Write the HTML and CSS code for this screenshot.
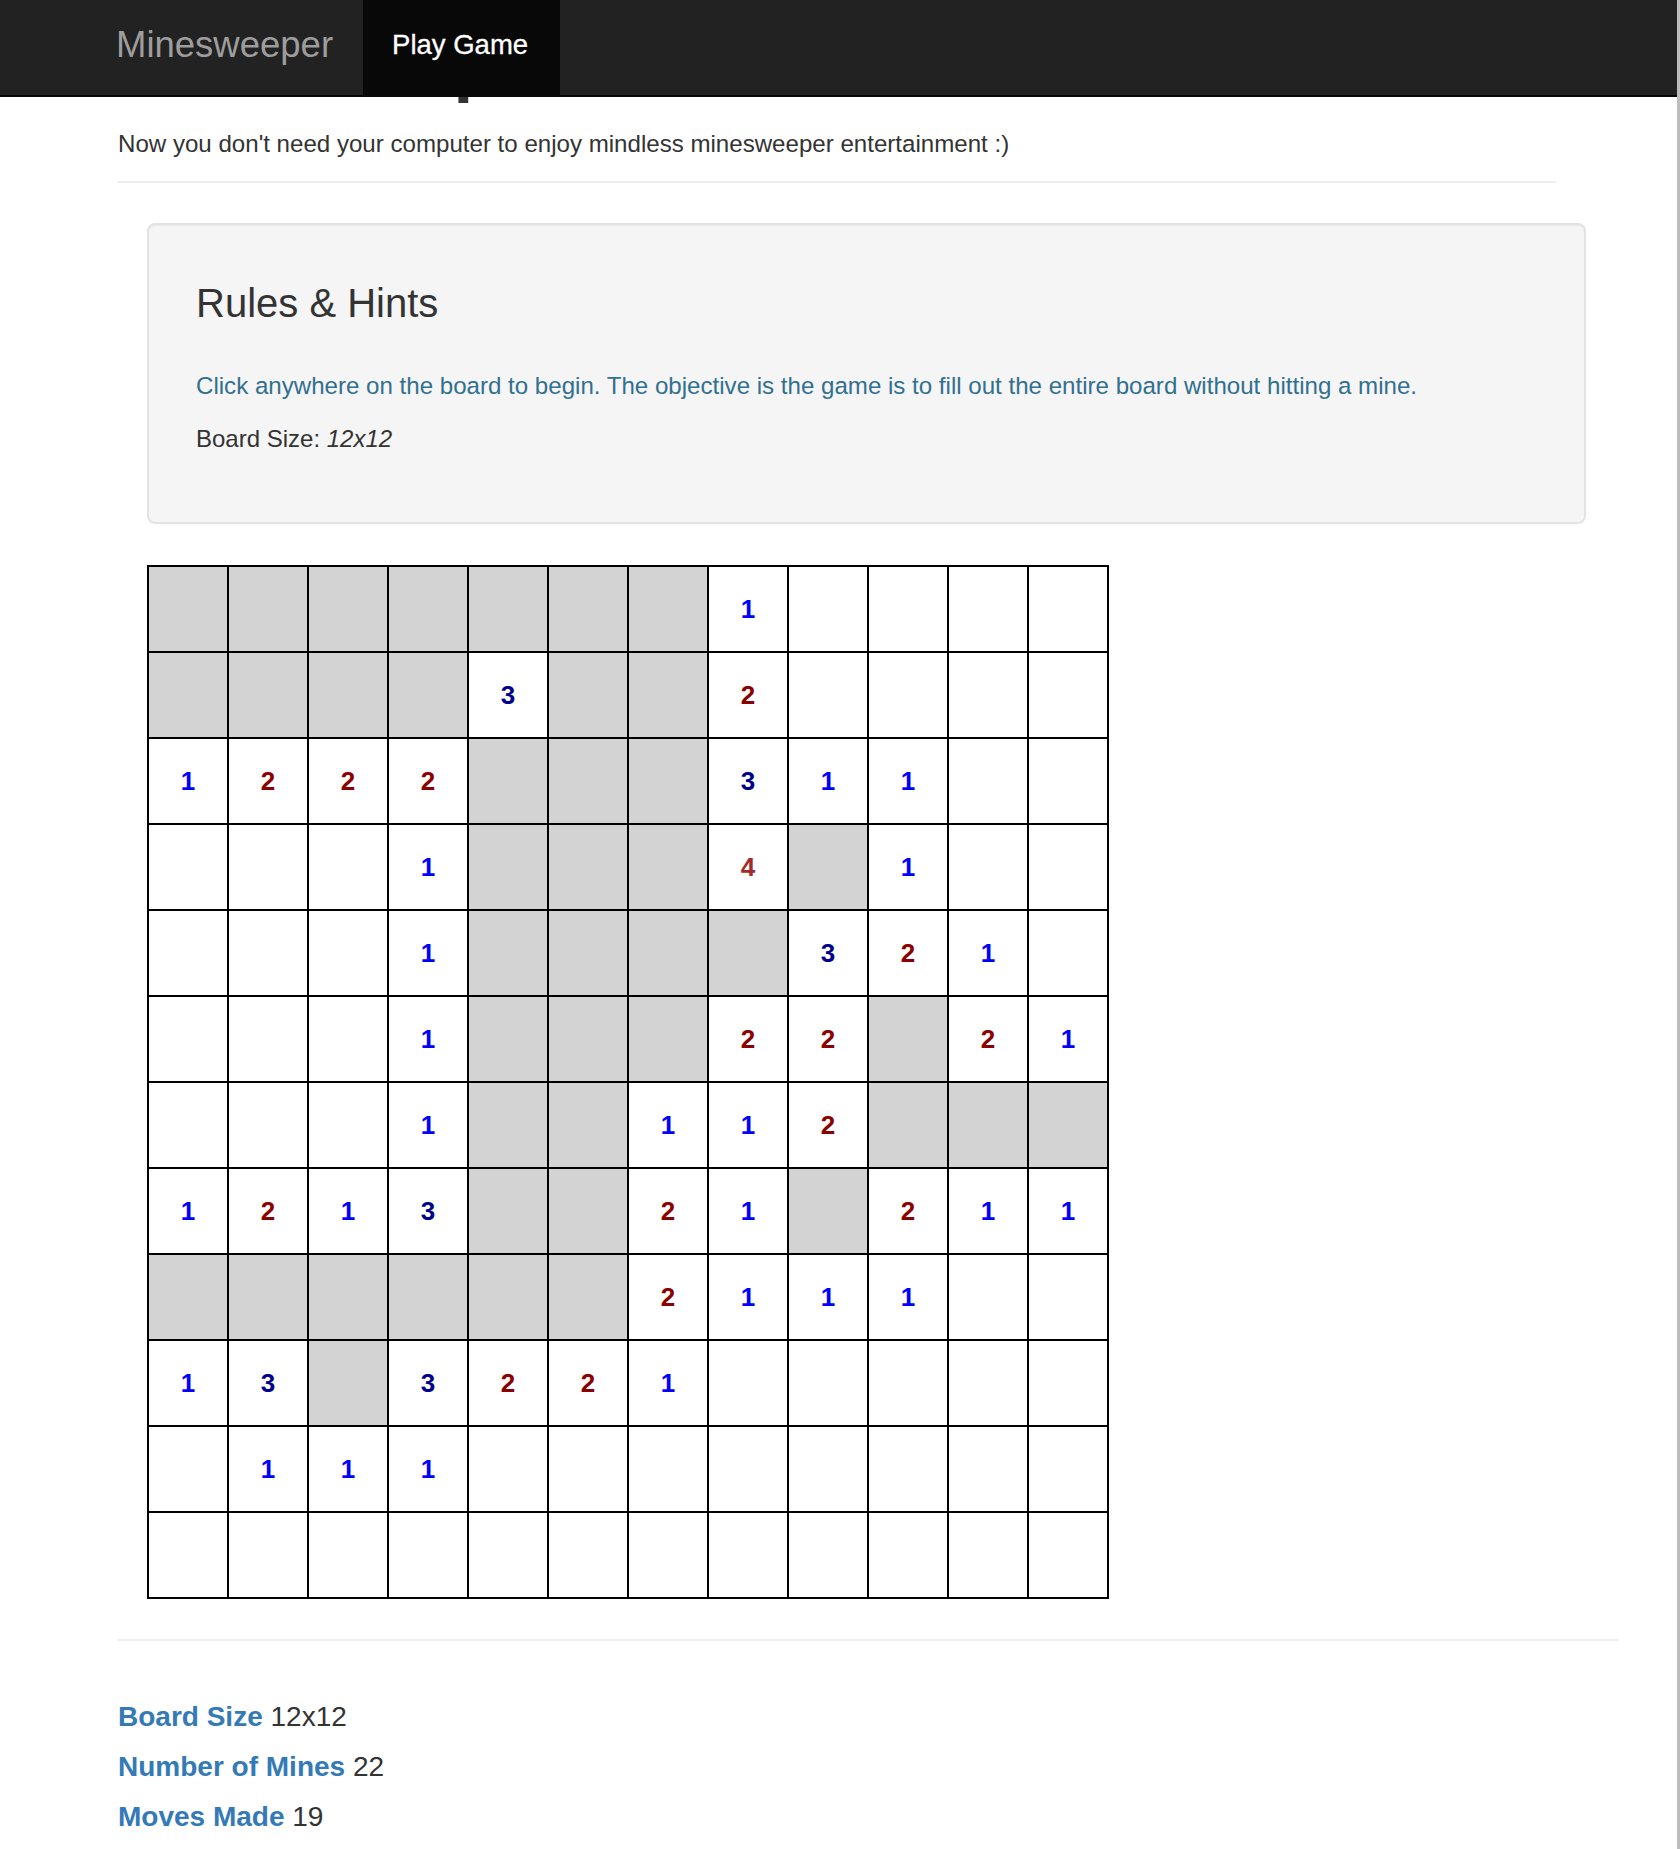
FILE: index.html
```html
<!DOCTYPE html>
<html lang="en">
<head>
<meta charset="utf-8">
<title>Minesweeper</title>
<link rel="stylesheet" href="styles.css">
</head>
<body>
<nav class="navbar">
  <a class="brand" href="#">Minesweeper</a>
  <a class="nav-link active" href="#">Play Game</a>
</nav>

<main class="main">
  <header class="page-header">
    <h1 class="title">Minesweeper</h1>
    <p class="subtitle">Now you don't need your computer to enjoy mindless minesweeper entertainment :)</p>
  </header>
  <hr class="rule rule-top">

  <section class="well">
    <h2 class="well-title">Rules &amp; Hints</h2>
    <p class="info">Click anywhere on the board to begin. The objective is the game is to fill out the entire board without hitting a mine.</p>
    <p class="size">Board Size: <em>12x12</em></p>
  </section>

  <div class="board">
    <div class="c g"></div><div class="c g"></div><div class="c g"></div><div class="c g"></div><div class="c g"></div><div class="c g"></div><div class="c g"></div><div class="c n1">1</div><div class="c"></div><div class="c"></div><div class="c"></div><div class="c"></div>
    <div class="c g"></div><div class="c g"></div><div class="c g"></div><div class="c g"></div><div class="c n3">3</div><div class="c g"></div><div class="c g"></div><div class="c n2">2</div><div class="c"></div><div class="c"></div><div class="c"></div><div class="c"></div>
    <div class="c n1">1</div><div class="c n2">2</div><div class="c n2">2</div><div class="c n2">2</div><div class="c g"></div><div class="c g"></div><div class="c g"></div><div class="c n3">3</div><div class="c n1">1</div><div class="c n1">1</div><div class="c"></div><div class="c"></div>
    <div class="c"></div><div class="c"></div><div class="c"></div><div class="c n1">1</div><div class="c g"></div><div class="c g"></div><div class="c g"></div><div class="c n4">4</div><div class="c g"></div><div class="c n1">1</div><div class="c"></div><div class="c"></div>
    <div class="c"></div><div class="c"></div><div class="c"></div><div class="c n1">1</div><div class="c g"></div><div class="c g"></div><div class="c g"></div><div class="c g"></div><div class="c n3">3</div><div class="c n2">2</div><div class="c n1">1</div><div class="c"></div>
    <div class="c"></div><div class="c"></div><div class="c"></div><div class="c n1">1</div><div class="c g"></div><div class="c g"></div><div class="c g"></div><div class="c n2">2</div><div class="c n2">2</div><div class="c g"></div><div class="c n2">2</div><div class="c n1">1</div>
    <div class="c"></div><div class="c"></div><div class="c"></div><div class="c n1">1</div><div class="c g"></div><div class="c g"></div><div class="c n1">1</div><div class="c n1">1</div><div class="c n2">2</div><div class="c g"></div><div class="c g"></div><div class="c g"></div>
    <div class="c n1">1</div><div class="c n2">2</div><div class="c n1">1</div><div class="c n3">3</div><div class="c g"></div><div class="c g"></div><div class="c n2">2</div><div class="c n1">1</div><div class="c g"></div><div class="c n2">2</div><div class="c n1">1</div><div class="c n1">1</div>
    <div class="c g"></div><div class="c g"></div><div class="c g"></div><div class="c g"></div><div class="c g"></div><div class="c g"></div><div class="c n2">2</div><div class="c n1">1</div><div class="c n1">1</div><div class="c n1">1</div><div class="c"></div><div class="c"></div>
    <div class="c n1">1</div><div class="c n3">3</div><div class="c g"></div><div class="c n3">3</div><div class="c n2">2</div><div class="c n2">2</div><div class="c n1">1</div><div class="c"></div><div class="c"></div><div class="c"></div><div class="c"></div><div class="c"></div>
    <div class="c"></div><div class="c n1">1</div><div class="c n1">1</div><div class="c n1">1</div><div class="c"></div><div class="c"></div><div class="c"></div><div class="c"></div><div class="c"></div><div class="c"></div><div class="c"></div><div class="c"></div>
    <div class="c"></div><div class="c"></div><div class="c"></div><div class="c"></div><div class="c"></div><div class="c"></div><div class="c"></div><div class="c"></div><div class="c"></div><div class="c"></div><div class="c"></div><div class="c"></div>
  </div>

  <hr class="rule rule-bottom">

  <div class="stats">
    <div class="stat"><span class="label">Board Size</span> 12x12</div>
    <div class="stat"><span class="label">Number of Mines</span> 22</div>
    <div class="stat"><span class="label">Moves Made</span> 19</div>
  </div>
</main>
</body>
</html>
```

FILE: styles.css
```css
html, body {
  margin: 0;
  padding: 0;
}

body {
  min-height: 100vh;
  box-sizing: border-box;
  border-right: 3px solid #bdbdbd;
  background: #fff;
  color: #333;
  font-family: "Liberation Sans", Arial, Helvetica, sans-serif;
  font-size: 24px;
}

.navbar {
  position: fixed;
  top: 0;
  left: 0;
  right: 3px;
  z-index: 10;
  height: 95px;
  background: #222;
  border-bottom: 2px solid #080808;
  display: flex;
  align-items: stretch;
  padding-left: 86px;
}

.brand {
  display: block;
  padding: 0 30px 0 30px;
  font-size: 36.5px;
  line-height: 89px;
  color: #9d9d9d;
  text-decoration: none;
}

.nav-link {
  display: block;
  padding: 0 32px 0 29px;
  font-size: 27.5px;
  line-height: 89px;
  color: #fff;
  text-decoration: none;
  -webkit-text-stroke: 0.3px #fff;
}

.nav-link.active {
  background: #080808;
}

.main {
  padding-left: 118px;
}

.page-header {
  width: 1438px;
}

.title {
  margin: 24px 0 0;
  font-size: 71px;
  line-height: 80px;
  font-weight: bold;
  color: #333;
}

.subtitle {
  margin: 23px 0 0;
  line-height: 34px;
  font-size: 24.1px;
}

.rule {
  height: 0;
  margin: 0;
  border: 0;
  border-top: 2px solid #eee;
}

.rule-top {
  width: 1438px;
  margin-top: 20px;
}

.well {
  box-sizing: border-box;
  width: 1439px;
  margin: 40px 0 0 29px;
  padding: 56px 47px 66px;
  background: #f5f5f5;
  border: 2px solid #e3e3e3;
  border-radius: 8px;
  box-shadow: inset 0 1px 1px rgba(0, 0, 0, 0.05);
}

.well-title {
  margin: 0 0 44px;
  font-size: 40px;
  line-height: 44px;
  font-weight: normal;
  color: #333;
}

.info {
  margin: 0 0 19px;
  line-height: 34px;
  font-size: 24.1px;
  color: #31708f;
}

.size {
  margin: 0;
  line-height: 34px;
}

.board {
  display: grid;
  grid-template-columns: repeat(12, 78px);
  grid-auto-rows: 84px;
  gap: 2px;
  width: max-content;
  margin: 41px 0 0 29px;
  border: 2px solid #000;
  background: #000;
}

.c {
  display: flex;
  align-items: center;
  justify-content: center;
  background: #fff;
  font-weight: bold;
  font-size: 26px;
}

.c.g { background: #d3d3d3; }
.n1 { color: #0000ff; }
.n2 { color: #8b0000; }
.n3 { color: #00008b; }
.n4 { color: #a52a2a; }

.rule-bottom {
  width: 1500px;
  margin-top: 40px;
}

.stats {
  margin-top: 51px;
  font-size: 28px;
  line-height: 50px;
}

.label {
  font-weight: bold;
  color: #337ab7;
}
```
